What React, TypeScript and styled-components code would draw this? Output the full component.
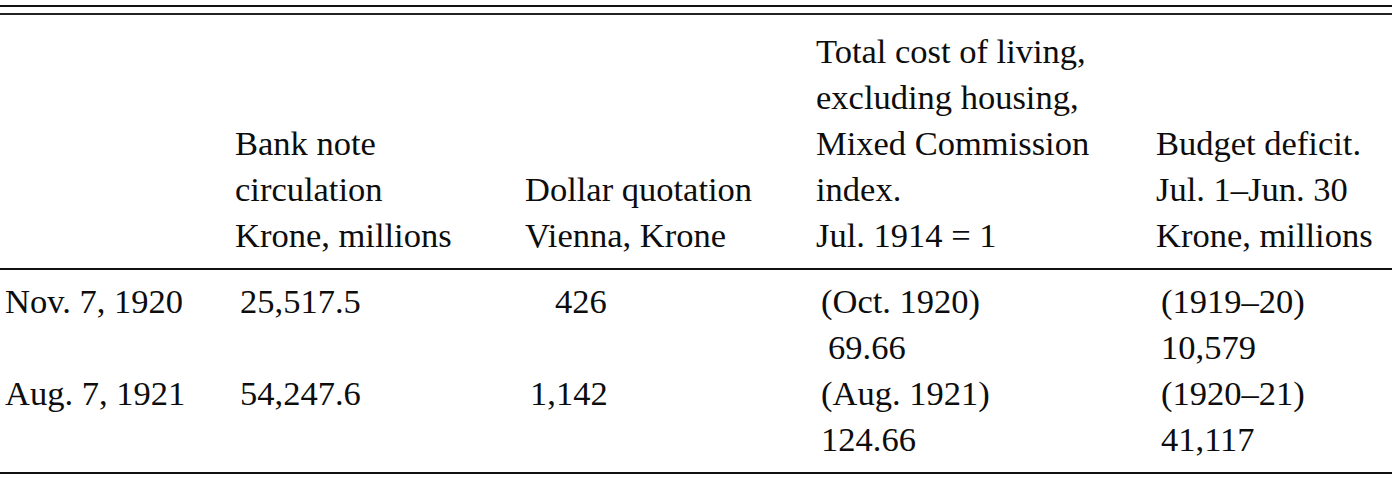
import React from 'react'
import styled, { createGlobalStyle } from 'styled-components'

const GlobalStyle = createGlobalStyle`
  body {
    margin: 0;
    background: #ffffff;
    font-family: "Liberation Serif", "DejaVu Serif", serif;
  }
`

type Cell = { lines: string[]; indents?: number[] }

const headers: string[][] = [
  [],
  ['Bank note', 'circulation', 'Krone, millions'],
  ['Dollar quotation', 'Vienna, Krone'],
  ['Total cost of living,', 'excluding housing,', 'Mixed Commission', 'index.', 'Jul. 1914 = 1'],
  ['Budget deficit.', 'Jul. 1–Jun. 30', 'Krone, millions'],
]

const rows: Cell[][] = [
  [
    { lines: ['Nov. 7, 1920'] },
    { lines: ['25,517.5'] },
    { lines: ['426'], indents: [25] },
    { lines: ['(Oct. 1920)', '69.66'], indents: [0, 7] },
    { lines: ['(1919–20)', '10,579'] },
  ],
  [
    { lines: ['Aug. 7, 1921'] },
    { lines: ['54,247.6'] },
    { lines: ['1,142'] },
    { lines: ['(Aug. 1921)', '124.66'] },
    { lines: ['(1920–21)', '41,117'] },
  ],
]

const App = () => {
  return (
    <Page>
      <GlobalStyle />
      <Table>
        <DoubleRule />
        <HeadRow>
          {headers.map((h, i) => (
            <Cell key={i}>
              {h.map((l) => (
                <Line key={l}>{l}</Line>
              ))}
            </Cell>
          ))}
        </HeadRow>
        <Rule />
        <Body>
          {rows.map((r, i) => (
            <Row key={i}>
              {r.map((c, j) => (
                <Cell key={j}>
                  {c.lines.map((l, k) => (
                    <Line key={k} $indent={c.indents?.[k]}>
                      {l}
                    </Line>
                  ))}
                </Cell>
              ))}
            </Row>
          ))}
        </Body>
        <Rule />
      </Table>
    </Page>
  )
}

export default App

const Page = styled.div`
  padding-top: 5px;
  font-family: "Liberation Serif", "DejaVu Serif", serif;
  font-size: 34.5px;
  color: #0d0d0d;
`

const Table = styled.div`
  width: 1392px;
`

const DoubleRule = styled.div`
  height: 6px;
  border-top: 2px solid #111;
  border-bottom: 2px solid #222;
`

const Rule = styled.div`
  height: 0;
  border-top: 2px solid #111;
`

const Columns = styled.div`
  display: grid;
  grid-template-columns: 235px 290px 291px 340px 1fr;
  padding-left: 5px;
`

const HeadRow = styled(Columns)`
  align-items: end;
  padding: 13px 0 10px;
`

const Cell = styled.div`
  display: flex;
  flex-direction: column;
`

const Body = styled.div`
  padding: 8px 0 10px;
`

const Row = styled(Columns)`
  align-items: start;
`

const Line = styled.div<{ $indent?: number }>`
  line-height: 46px;
  white-space: nowrap;
  padding-left: ${({ $indent }) => $indent ?? 0}px;
`
